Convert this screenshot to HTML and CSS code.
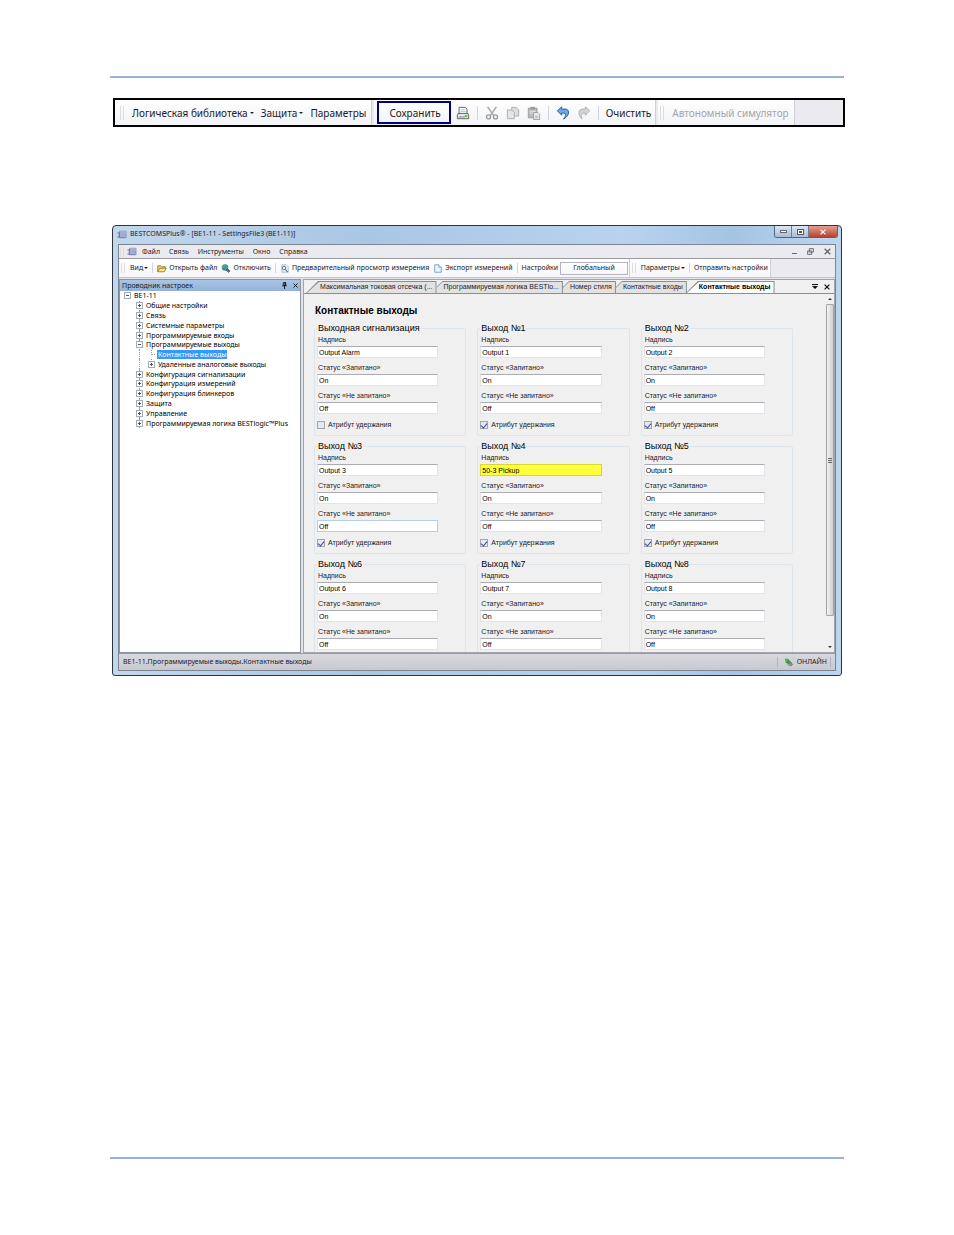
FILE: index.html
```html
<!DOCTYPE html>
<html lang="ru">
<head>
    <meta charset="UTF-8">
    <meta name="viewport" content="width=device-width, initial-scale=1.0">
    <title>BESTCOMSPlus - Контактные выходы</title>
    <link rel="stylesheet" href="styles.css">
</head>
<body>
    <svg class="sprite" aria-hidden="true">
        <symbol id="app" viewBox="0 0 20 16">
            <path d="M5 1.500h13v13H5z" fill="#eef2ff" stroke="#6f7fb8" stroke-width="1.500"/>
            <path d="M1 5h16M3 9h15M1 13h16" stroke="#4a5a9a" stroke-width="1.800" fill="none"/>
        </symbol>
        <symbol id="tools-print" viewBox="0 0 16 16">
            <path d="M3.500 9V1.500h7l2 2V9" fill="#fff" stroke="#556"/>
            <path d="M5 4.500h5M5 6.500h6" stroke="#9cc4ec"/>
            <path d="M2.500 8.500h11l1 2v4h-13v-4z" fill="#e3e6ea" stroke="#555"/>
            <path d="M3 12.500h7" stroke="#888"/>
            <path d="M10 11.500h3" stroke="#3c3" stroke-width="2"/>
        </symbol>
        <symbol id="tools-cut" viewBox="0 0 16 16">
            <path d="M3 1l7 10M13 1L6 11" stroke="#aaa" stroke-width="1.800" fill="none"/>
            <circle cx="4" cy="12.500" r="2.300" fill="none" stroke="#999" stroke-width="1.500"/>
            <circle cx="12" cy="12.500" r="2.300" fill="none" stroke="#999" stroke-width="1.500"/>
        </symbol>
        <symbol id="tools-copy" viewBox="0 0 16 16">
            <path d="M6.500 1.500h5l3 3v7h-8z" fill="#ddd" stroke="#aaa"/>
            <path d="M1.500 4.500h5l3 3v7h-8z" fill="#e4e4e4" stroke="#aaa"/>
        </symbol>
        <symbol id="tools-paste" viewBox="0 0 16 16">
            <path d="M1.500 2.500h10v11h-10z" fill="#bbb" stroke="#999"/>
            <path d="M4 1h5v3H4z" fill="#999"/>
            <path d="M3 6h7M3 8h4" stroke="#eee"/>
            <path d="M7.500 7.500h5l2 2v6h-7z" fill="#eee" stroke="#999"/>
            <path d="M9 11.500h4M9 13.500h4" stroke="#aaa"/>
        </symbol>
        <symbol id="tools-undo" viewBox="0 0 16 16">
            <path d="M1.500 5.500L6.500 1v2.500h4c5 0 6 7-2 11.500 4-5 3-7-2-7V10.500z" fill="#6aa8ea" stroke="#1d4f9c"/>
        </symbol>
        <symbol id="tools-redo" viewBox="0 0 16 16">
            <path d="M14.500 5.500L9.500 1v2.500h-3c-5 0-6 6-1 11.500-1-5 0-7 4-7V10.500z" fill="#d4d4d4" stroke="#aaa"/>
        </symbol>
        <symbol id="folder" viewBox="0 0 20 16">
            <path d="M1.500 14.500v-12h6l2 2h7v3" fill="#f5cf62" stroke="#8a6a1c" stroke-width="1.500"/>
            <path d="M1.500 14.500l4-7h13l-4 7z" fill="#ffe48c" stroke="#8a6a1c" stroke-width="1.500"/>
        </symbol>
        <symbol id="globe" viewBox="0 0 18 18">
            <circle cx="7" cy="7" r="6.500" fill="#3b86d8"/>
            <path d="M3 3c3-3 6-1 5 1s-1 2-3 3-3 1-4 0 1-3 2-4zM9 6l4 1-2 5-3-2z" fill="#4fb848"/>
            <path d="M9 12l3-3 5 5-3 3z" fill="#667" stroke="#334"/>
        </symbol>
        <symbol id="preview" viewBox="0 0 18 18">
            <path d="M2.500 1.500h9l4 4v11h-13z" fill="#e6f1fd" stroke="#6a8fc0"/>
            <circle cx="7" cy="8" r="3.500" fill="#fff" stroke="#446" stroke-width="1.500"/>
            <path d="M10 11l4 5" stroke="#446" stroke-width="2"/>
        </symbol>
        <symbol id="doc" viewBox="0 0 16 18">
            <path d="M1.500 1.500h8l5 5v10h-13z" fill="#eaf4ff" stroke="#6288bc" stroke-width="1.500"/>
            <path d="M9.500 1.500v5h5" fill="#fff" stroke="#6288bc" stroke-width="1.500"/>
        </symbol>
        <symbol id="pin" viewBox="0 0 8 12">
            <path d="M2 1h4v5H2zM0 6.500h8M4 7v5" fill="none" stroke="#111" stroke-width="1.500"/>
            <path d="M5 1v5" stroke="#111" stroke-width="2"/>
        </symbol>
        <symbol id="close" viewBox="0 0 10 10">
            <path d="M1 1l8 8M9 1L1 9" stroke="currentColor" stroke-width="2" fill="none"/>
        </symbol>
        <symbol id="restore" viewBox="0 0 12 12">
            <path d="M4 1h7v6H4zM1 5h7v6H1z" fill="#ddd" stroke="#667" stroke-width="1.500"/>
        </symbol>
        <symbol id="plug" viewBox="0 0 18 18">
            <path d="M2 2l6 1 3 5-3 3-5-2z" fill="#3aa83a" stroke="#1d6e1d"/>
            <path d="M7 7l6 1 3 5-3 3-5-2z" fill="#888" stroke="#555"/>
            <path d="M2 6h3M5 1v4M3 14h9" stroke="#7d7" stroke-width="1.500"/>
        </symbol>
    </svg>

    <main class="page">
        <hr class="rule">

        <div class="logic-bar" role="toolbar" aria-label="Логика">
            <div class="logic-group">
                <span class="grip"></span>
                <button>Логическая библиотека <i class="caret"></i></button>
                <button>Защита <i class="caret"></i></button>
                <button>Параметры</button>
            </div>
            <div class="logic-group">
                <button class="save-btn">Сохранить</button>
                <button class="icon-btn" aria-label="Печать"><svg><use href="#tools-print"/></svg></button>
                <span class="sep"></span>
                <button class="icon-btn" aria-label="Вырезать"><svg><use href="#tools-cut"/></svg></button>
                <button class="icon-btn" aria-label="Копировать"><svg><use href="#tools-copy"/></svg></button>
                <button class="icon-btn" aria-label="Вставить"><svg><use href="#tools-paste"/></svg></button>
                <span class="sep"></span>
                <button class="icon-btn" aria-label="Отменить"><svg><use href="#tools-undo"/></svg></button>
                <button class="icon-btn" aria-label="Вернуть"><svg><use href="#tools-redo"/></svg></button>
                <span class="sep"></span>
                <button>Очистить</button>
            </div>
            <div class="logic-group simulator">
                <span class="grip"></span>
                <button disabled>Автономный симулятор</button>
            </div>
        </div>

        <section class="window">
            <header class="titlebar">
                <svg class="icon"><use href="#app"/></svg>
                <span>BESTCOMSPlus® - [BE1-11 - SettingsFile3 (BE1-11)]</span>
                <div class="window-controls">
                    <button aria-label="Свернуть"><i class="min"></i></button>
                    <button aria-label="Развернуть"><i class="max"></i></button>
                    <button class="close-btn" aria-label="Закрыть"><svg><use href="#close"/></svg></button>
                </div>
            </header>

            <div class="client">
                <nav class="menu">
                    <span class="grip"></span>
                    <svg class="icon"><use href="#app"/></svg>
                    <button>Файл</button>
                    <button>Связь</button>
                    <button>Инструменты</button>
                    <button>Окно</button>
                    <button>Справка</button>
                    <div class="mdi-controls">
                        <button aria-label="Свернуть окно"><i class="min"></i></button>
                        <button aria-label="Восстановить окно"><svg><use href="#restore"/></svg></button>
                        <button aria-label="Закрыть окно"><svg><use href="#close"/></svg></button>
                    </div>
                </nav>

                <div class="toolbar" role="toolbar" aria-label="Главная">
                    <div class="tool-group">
                        <span class="grip"></span>
                        <button>Вид<i class="caret"></i></button>
                        <span class="sep"></span>
                        <button><svg class="icon"><use href="#folder"/></svg>Открыть файл</button>
                        <button><svg class="icon"><use href="#globe"/></svg>Отключить</button>
                        <span class="sep"></span>
                        <button><svg class="icon"><use href="#preview"/></svg>Предварительный просмотр измерения</button>
                        <button><svg class="icon"><use href="#doc"/></svg>Экспорт измерений</button>
                        <span class="sep"></span>
                        <button>Настройки</button>
                        <button class="scope-btn">Глобальный</button>
                    </div>
                    <div class="tool-group">
                        <span class="grip"></span>
                        <button>Параметры<i class="caret"></i></button>
                        <span class="sep"></span>
                        <button>Отправить настройки</button>
                    </div>
                </div>

                <div class="workspace">
                    <aside class="explorer">
                        <div class="explorer-head">
                            <span>Проводник настроек</span>
                            <button aria-label="Закрепить"><svg><use href="#pin"/></svg></button>
                            <button aria-label="Закрыть панель"><svg><use href="#close"/></svg></button>
                        </div>
                        <ul class="tree">
                            <li><button class="toggle open" aria-label="Свернуть"></button>BE1-11</li>
                            <li class="level-1"><button class="toggle" aria-label="Развернуть"></button>Общие настройки</li>
                            <li class="level-1"><button class="toggle" aria-label="Развернуть"></button>Связь</li>
                            <li class="level-1"><button class="toggle" aria-label="Развернуть"></button>Системные параметры</li>
                            <li class="level-1"><button class="toggle" aria-label="Развернуть"></button>Программируемые входы</li>
                            <li class="level-1"><button class="toggle open" aria-label="Свернуть"></button>Программируемые выходы</li>
                            <li class="level-2"><span class="branch"></span><span class="selected">Контактные выходы</span></li>
                            <li class="level-2"><button class="toggle" aria-label="Развернуть"></button>Удаленные аналоговые выходы</li>
                            <li class="level-1"><button class="toggle" aria-label="Развернуть"></button>Конфигурация сигнализации</li>
                            <li class="level-1"><button class="toggle" aria-label="Развернуть"></button>Конфигурация измерений</li>
                            <li class="level-1"><button class="toggle" aria-label="Развернуть"></button>Конфигурация блинкеров</li>
                            <li class="level-1"><button class="toggle" aria-label="Развернуть"></button>Защита</li>
                            <li class="level-1"><button class="toggle" aria-label="Развернуть"></button>Управление</li>
                            <li class="level-1"><button class="toggle" aria-label="Развернуть"></button>Программируемая логика BESTlogic™Plus</li>
                        </ul>
                    </aside>

                    <div class="document">
                        <div class="tabs" role="tablist">
                            <button class="tab first" role="tab">Максимальная токовая отсечка (...</button>
                            <button class="tab" role="tab">Программируемая логика BESTlo...</button>
                            <button class="tab" role="tab">Номер стиля</button>
                            <button class="tab" role="tab">Контактные входы</button>
                            <button class="tab active" role="tab" aria-selected="true">Контактные выходы</button>
                            <div class="tab-controls">
                                <button aria-label="Список вкладок"><i class="list"></i></button>
                                <button aria-label="Закрыть вкладку"><svg><use href="#close"/></svg></button>
                            </div>
                        </div>

                        <div class="panel">
                            <form class="outputs">
                                <h1>Контактные выходы</h1>
                                <div class="output-grid" id="outputGrid"></div>
                            </form>
                            <div class="scrollbar">
                                <i class="arrow up"></i>
                                <div class="thumb"></div>
                                <i class="arrow down"></i>
                            </div>
                        </div>
                    </div>
                </div>

                <footer class="status">
                    <span>BE1-11.Программируемые выходы.Контактные выходы</span>
                    <span class="online"><svg class="icon"><use href="#plug"/></svg>ОНЛАЙН</span>
                </footer>
            </div>
        </section>

        <hr class="rule bottom">
    </main>

    <script>
        const outputs = [
            { title: 'Выходная сигнализация', label: 'Output Alarm', hold: false },
            { title: 'Выход №1', label: 'Output 1', hold: true },
            { title: 'Выход №2', label: 'Output 2', hold: true },
            { title: 'Выход №3', label: 'Output 3', hold: true, focus: true },
            { title: 'Выход №4', label: '50-3 Pickup', hold: true, changed: true },
            { title: 'Выход №5', label: 'Output 5', hold: true },
            { title: 'Выход №6', label: 'Output 6' },
            { title: 'Выход №7', label: 'Output 7' },
            { title: 'Выход №8', label: 'Output 8' }
        ];

        function holdBox(out) {
            if (out.hold === undefined) return '';
            return `
                <label class="check">
                    <input type="checkbox" ${out.hold ? 'checked' : ''}>Атрибут удержания
                </label>
            `;
        }

        document.getElementById('outputGrid').innerHTML = outputs.map((out, i) => `
            <fieldset>
                <legend>${out.title}</legend>
                <label for="label${i}">Надпись</label>
                <input type="text" id="label${i}" value="${out.label}" class="${out.changed ? 'changed' : ''}">
                <label for="on${i}">Статус «Запитано»</label>
                <input type="text" id="on${i}" value="On">
                <label for="off${i}">Статус «Не запитано»</label>
                <input type="text" id="off${i}" value="Off" class="${out.focus ? 'focused' : ''}">
                ${holdBox(out)}
            </fieldset>
        `).join('');
    </script>
</body>
</html>
```
FILE: styles.css
```css
* {
    box-sizing: border-box;
}

body {
    margin: 0;
    background: #fff;
    color: #1a1a2a;
    font-family: "Noto Sans", sans-serif;
    font-size: 7px;
    line-height: 10px;
}

button {
    display: flex;
    align-items: center;
    padding: 0;
    border: 0;
    background: none;
    color: inherit;
    font: inherit;
    white-space: nowrap;
}

.sprite {
    display: none;
}

.page {
    display: flex;
    flex-direction: column;
    min-height: 100vh;
    padding: 76px 110px;
}

.rule {
    width: 100%;
    height: 2px;
    margin: 0;
    border: 0;
    background: #95b3d7;
}

.rule.bottom {
    margin-top: auto;
}

.icon {
    flex: none;
    width: 10px;
    height: 9px;
}

.caret {
    flex: none;
    margin-left: 1px;
    border: 2px solid transparent;
    border-top-color: #222;
    border-bottom: 0;
}

.grip {
    flex: none;
    width: 4px;
    height: 10px;
    border: solid #dcdce3;
    border-width: 0 1px;
}

.sep {
    flex: none;
    width: 1px;
    height: 10px;
    background: #d4d4dc;
}

/* Logic toolbar */
.logic-bar {
    display: flex;
    gap: 3px;
    height: 29px;
    margin: 20px -1px 0 3px;
    border: 2px solid #000;
    background: #eaeaef;
    font-size: 10px;
    line-height: 14px;
    overflow: hidden;
}

.logic-group {
    display: flex;
    align-items: center;
    gap: 7px;
    padding: 0 5px;
    background: linear-gradient(#fff, #f2f3f6);
    box-shadow: 1px 0 #cfcfd6;
}

.logic-group .caret {
    margin-left: 2px;
}

.logic-group .grip {
    height: 14px;
    margin-right: 1px;
}

.logic-group .sep {
    height: 14px;
}

.logic-group:nth-child(2) {
    padding: 0 4px 0 3px;
}

.logic-group.simulator {
    padding-left: 2px;
}

.simulator button {
    color: #a4a4ac;
}

.save-btn {
    height: 23px;
    margin-right: -2px;
    padding: 0 8px 0 10px;
    border: 2px solid #000080;
}

.icon-btn svg {
    width: 14px;
    height: 14px;
}

/* Application window */
.window {
    margin: 98px 2px 0;
    padding: 0 5px 4px;
    border: 1px solid #2c3440;
    border-radius: 4px 4px 3px 3px;
    background: linear-gradient(90deg, #c3d7ec, #a9c6e3 35%, #b9d3ee 70%, #a5c4e2 85%, #bcd6f0);
}

.titlebar {
    display: flex;
    align-items: flex-start;
    gap: 3px;
    height: 18px;
    margin: 0 -2px 0 -1px;
    line-height: 16px;
}

.titlebar .icon {
    margin-top: 4px;
}

.window-controls {
    display: flex;
    margin-left: auto;
    border: 1px solid #56657a;
    border-top: 0;
    border-radius: 0 0 3px 3px;
    overflow: hidden;
}

.window-controls button {
    justify-content: center;
    width: 17px;
    height: 11px;
    border-right: 1px solid #6b7d93;
    background: linear-gradient(#dbe6f2, #a9bdd4);
}

.window-controls .close-btn {
    width: 28px;
    border: 0;
    color: #fff;
    background: linear-gradient(#e0a294, #b8402c);
}

.window-controls svg {
    width: 6px;
    height: 6px;
}

.min {
    width: 7px;
    height: 3px;
    border: 1px solid #667;
    background: #fff;
}

.max {
    width: 7px;
    height: 6px;
    border: 1px solid #556;
    outline: 1px solid #fff;
    outline-offset: -2px;
    background: #556;
}

.client {
    border: 1px solid #7d8590;
    background: #ebebef;
}

.menu {
    display: flex;
    align-items: center;
    gap: 9px;
    height: 14px;
    padding-left: 1px;
    border-bottom: 1px solid #9a9aa2;
}

.menu .icon {
    margin: 0 -4px 0 -6px;
}

.mdi-controls {
    display: flex;
    align-items: center;
    gap: 10px;
    margin-left: auto;
    padding-right: 4px;
    color: #667;
}

.mdi-controls svg {
    width: 7px;
    height: 7px;
}

.mdi-controls .min {
    width: 5px;
    height: 1px;
    margin-top: 3px;
    border: 0;
    background: #667;
}

.toolbar {
    display: flex;
    gap: 1px;
    height: 19px;
    border-bottom: 1px solid #c4c4cc;
    overflow: hidden;
}

.tool-group {
    display: flex;
    align-items: center;
    gap: 4px;
    padding: 0 2px;
    background: linear-gradient(#fff, #f6f6f9);
    box-shadow: 1px 0 #cfcfd6;
}

.tool-group .grip {
    margin-right: 1px;
}

.tool-group .icon {
    margin-right: 2px;
}

.scope-btn {
    height: 13px;
    margin: 0 -1px 0 -2px;
    padding: 0 12px;
    border: 1px solid #b4b4bc;
}

/* Workspace */
.workspace {
    display: flex;
    gap: 2px;
    height: 375px;
    padding-top: 1px;
    background: #e2e2e8;
}

.explorer {
    flex: 0 0 182px;
    border: 1px solid #8c94a0;
    background: #fff;
}

.explorer-head {
    display: flex;
    align-items: center;
    gap: 6px;
    height: 11px;
    padding: 0 2px;
    background: linear-gradient(#a9c5e6, #92b2d8);
}

.explorer-head span {
    flex: 1;
}

.explorer-head svg {
    width: 5px;
    height: 7px;
}

.tree {
    display: grid;
    grid-auto-rows: 1fr;
    height: 137px;
    margin: 0;
    padding: 0;
    color: #000;
    line-height: 9px;
    list-style: none;
}

.tree li {
    display: flex;
    position: relative;
    align-items: center;
    gap: 3px;
    min-height: 0;
    padding-left: 4px;
    white-space: nowrap;
}

.tree .level-1 {
    padding-left: 16px;
}

.tree .level-2 {
    padding-left: 28px;
}

.level-1::before,
.level-2::before,
.level-2::after {
    content: "";
    position: absolute;
    top: 0;
    bottom: 0;
    left: 19px;
    border-left: 1px dotted #999;
}

.level-2::after {
    left: 31px;
    bottom: 50%;
}

.toggle {
    position: relative;
    z-index: 1;
    flex: none;
    width: 7px;
    height: 7px;
    border: 1px solid #a4acba;
    background: linear-gradient(#456, #456) center / 3px 1px no-repeat, linear-gradient(#456, #456) center / 1px 3px no-repeat, #fff;
}

.toggle.open {
    background: linear-gradient(#456, #456) center / 3px 1px no-repeat, #fff;
}

.branch {
    width: 4px;
    margin-left: 3px;
    margin-right: -1px;
    border-top: 1px dotted #999;
}

.selected {
    padding: 0 1px;
    background: #3399ff;
    color: #fff;
}

/* Tabbed document */
.document {
    display: flex;
    flex: 1;
    flex-direction: column;
    min-width: 0;
    border: 1px solid #a4a4ac;
}

.tabs {
    display: flex;
    align-items: flex-end;
    height: 14px;
    padding-left: 2px;
    border-bottom: 1px solid #8c8c94;
    background: #f0f0f0;
    font-family: "Liberation Sans", sans-serif;
}

.tab {
    position: relative;
    isolation: isolate;
    height: 12px;
    padding: 0 4px 0 7px;
}

.tab::before,
.tab::after {
    content: "";
    position: absolute;
    z-index: -1;
    inset: 0;
    background: #8c8c94;
    clip-path: polygon(0 6px, 6px 0, 100% 0, 100% 100%, 0 100%);
}

.tab::after {
    inset: 1px 1px 0 0;
    background: #e2e2e2;
}

.tab.first {
    padding-left: 14px;
}

.tab.active {
    margin-left: -1px;
    padding: 0 4px 0 13px;
    color: #000;
    font-weight: bold;
}

.tab.first::before,
.tab.first::after,
.tab.active::before,
.tab.active::after {
    clip-path: polygon(0 100%, 12px 0, 100% 0, 100% 100%);
}

.tab.first::after,
.tab.active::after {
    left: 1px;
}

.tab.active::after {
    background: #fff;
}

.tab-controls {
    display: flex;
    align-items: center;
    align-self: center;
    gap: 6px;
    margin-left: auto;
    padding-right: 4px;
    color: #111;
}

.tab-controls svg {
    width: 6px;
    height: 6px;
}

.list {
    width: 6px;
    height: 5px;
    background: #111;
    clip-path: polygon(0 0, 100% 0, 100% 1px, 0 1px, 0 2px, 100% 2px, 50% 100%, 0 2px);
}

.panel {
    display: flex;
    flex: 1;
    min-height: 0;
    background: #f0f0f0;
    font-family: "Liberation Sans", sans-serif;
}

.outputs {
    flex: 1;
    padding: 11px 32px 0 10px;
    overflow: hidden;
}

.outputs h1 {
    margin: 0 0 5px 1px;
    color: #000;
    font-size: 10px;
    line-height: 12px;
}

.output-grid {
    display: grid;
    grid-template-columns: repeat(3, 1fr);
    gap: 4px 11px;
}

fieldset {
    display: flex;
    flex-direction: column;
    align-items: flex-start;
    min-width: 0;
    height: 114px;
    margin: 0;
    padding: 1px 2px;
    border: 1px solid #dce5ec;
    border-radius: 2px;
}

legend {
    padding: 0 1px;
    color: #000;
    font-size: 9px;
    line-height: 12px;
}

label {
    height: 11px;
    padding-left: 1px;
}

input[type="text"] {
    width: 83%;
    height: 12px;
    margin: 0 0 5px;
    padding: 0 1px;
    border: 1px solid #e2e3ea;
    border-top-color: #abadb3;
    background: #fff;
    color: #000;
    font: inherit;
}

input[type="text"].changed {
    background: #ffff3c;
    border-color: #d8d830;
}

input[type="text"].focused {
    border-color: #b5cfe7;
}

.check {
    display: flex;
    align-items: center;
    gap: 3px;
    padding-left: 0;
}

input[type="checkbox"] {
    display: grid;
    place-items: center;
    width: 8px;
    height: 8px;
    margin: 0;
    border: 1px solid #a4a6aa;
    background: #e4e8f1;
    appearance: none;
}

input[type="checkbox"]:checked::after {
    content: "";
    width: 3px;
    height: 5px;
    border: solid #3a4a9a;
    border-width: 0 1px 1px 0;
    transform: rotate(40deg);
}

.scrollbar {
    display: flex;
    flex-direction: column;
    align-items: center;
    flex: none;
    width: 9px;
    background: #f0f0f0;
}

.thumb {
    width: 8px;
    height: 312px;
    border: 1px solid #a4a4a4;
    border-radius: 1px;
    background: repeating-linear-gradient(#666 0 1px, transparent 1px 2px) center / 4px 5px no-repeat, linear-gradient(90deg, #f4f4f4, #cfcfd2);
}

.arrow {
    margin: 4px 0;
    border: 2px solid transparent;
}

.arrow.up {
    border-top: 0;
    border-bottom-color: #333;
}

.arrow.down {
    margin-top: auto;
    border-bottom: 0;
    border-top-color: #333;
}

.status {
    display: flex;
    align-items: center;
    justify-content: space-between;
    height: 17px;
    padding: 0 4px;
    border-top: 1px solid #9a9aa2;
    background: linear-gradient(#d8d8de, #c8c8d0);
}

.online {
    display: flex;
    align-items: center;
    gap: 3px;
    padding: 0 3px 0 6px;
    border: solid #b4b4bc;
    border-width: 0 1px;
}
```
